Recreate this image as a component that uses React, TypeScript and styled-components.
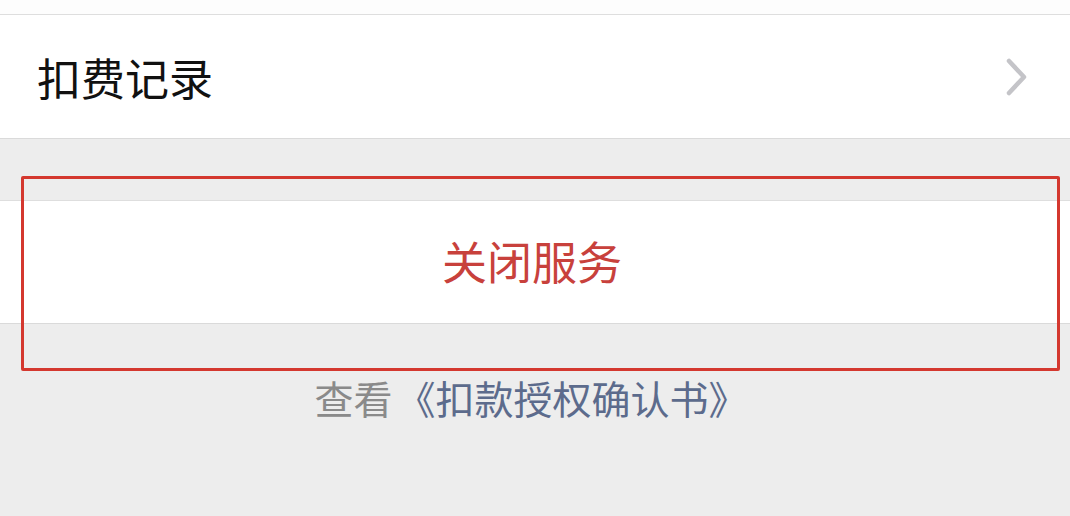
import React from "react";
import styled, { createGlobalStyle } from "styled-components";

const Global = createGlobalStyle`
  html, body { margin: 0; padding: 0; background: #ededed; }
  body { font-family: "Noto Sans CJK SC", "Noto Sans", sans-serif; }
`;

const Page = styled.div`
  position: relative;
  width: 1070px;
  height: 516px;
  overflow: hidden;
  background: #ededed;
`;

const TopStrip = styled.div`
  height: 14px;
  background: #fdfdfd;
  border-bottom: 1px solid #dedede;
`;

const Row = styled.div`
  height: 123px;
  background: #ffffff;
  border-bottom: 1px solid #dadada;
  display: flex;
  align-items: center;
  justify-content: space-between;
  padding: 0 40px 0 37px;
`;

const RowLabel = styled.span`
  font-size: 44px;
  color: #111111;
  line-height: 1;
`;

const Gap = styled.div`
  height: 61px;
`;

const Action = styled.div`
  height: 122px;
  background: #ffffff;
  border-top: 1px solid #dedede;
  border-bottom: 1px solid #dadada;
  display: flex;
  align-items: center;
  justify-content: center;
`;

const ActionLabel = styled.span`
  font-size: 45px;
  color: #c8413c;
  line-height: 1;
  margin-right: 6px;
  margin-bottom: 4px;
`;

const Footer = styled.div`
  display: flex;
  justify-content: center;
  padding-top: 54px;
  font-size: 39px;
  line-height: 1;
  padding-right: 8px;
`;

const Muted = styled.span`
  color: #8a8a8a;
  margin-right: 4px;
`;

const Link = styled.span`
  color: #5c6b8c;
`;

const Highlight = styled.div`
  position: absolute;
  left: 21px;
  top: 176px;
  width: 1033px;
  height: 189px;
  border: 3px solid #d4382f;
  border-radius: 2px;
  pointer-events: none;
`;

const Chevron = () => (
  <svg width="26" height="40" viewBox="0 0 26 40">
    <path
      d="M5 4 L20 20 L5 36"
      fill="none"
      stroke="#c4c4c8"
      strokeWidth="4.5"
      strokeLinecap="round"
      strokeLinejoin="round"
    />
  </svg>
);

export default function App() {
  return (
    <Page>
      <Global />
      <TopStrip />
      <Row>
        <RowLabel>扣费记录</RowLabel>
        <Chevron />
      </Row>
      <Gap />
      <Action>
        <ActionLabel>关闭服务</ActionLabel>
      </Action>
      <Footer>
        <Muted>查看</Muted>
        <Link>《扣款授权确认书》</Link>
      </Footer>
      <Highlight />
    </Page>
  );
}
